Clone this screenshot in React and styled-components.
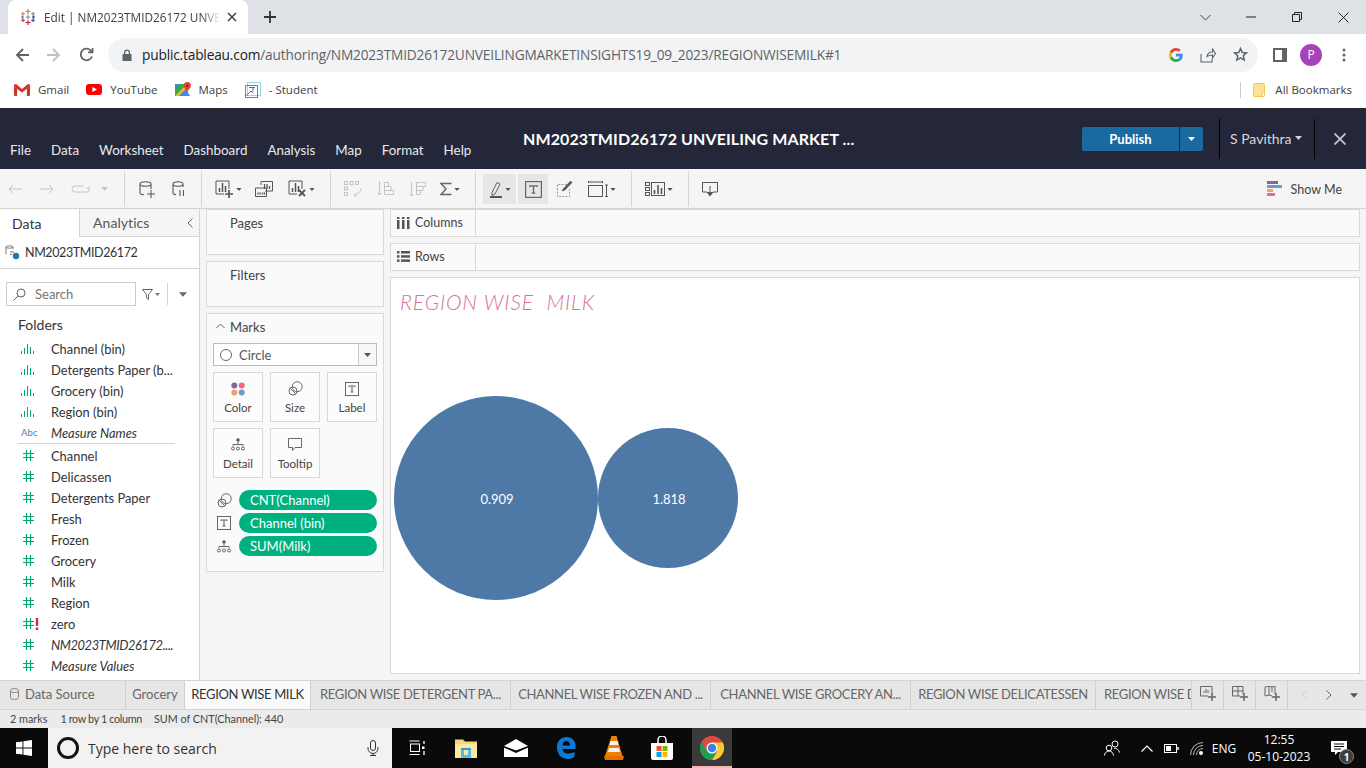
import React from 'react';
import styled, { createGlobalStyle } from 'styled-components';

const Global = createGlobalStyle`
  html, body { margin: 0; padding: 0; background: #fff; }
  #root { width: 1366px; height: 768px; overflow: hidden; }
  * { box-sizing: border-box; }
`;
const Page = styled.div`
  width: 1366px; height: 768px; display: flex; flex-direction: column; overflow: hidden;
  font-family: "Lato", "Open Sans", sans-serif; color: #333;
`;
const Svg = styled.svg`display: block; flex: none;`;

/* ---------- browser chrome ---------- */
const TabStrip = styled.div`
  height: 34px; background: #dee1e6; display: flex; align-items: stretch; padding-left: 8px; flex: none;
`;
const BrowserTab = styled.div`
  width: 240px; background: #fff; border-radius: 8px 8px 0 0; display: flex; align-items: center; padding: 0 10px 0 12px;
  font: 11.8px "Open Sans", sans-serif; color: #3c4043;
`;
const TabTitle = styled.span`
  margin-left: 8px; width: 176px; white-space: nowrap; overflow: hidden;
  -webkit-mask-image: linear-gradient(90deg, #000 90%, transparent);
  mask-image: linear-gradient(90deg, #000 90%, transparent);
`;
const TabClose = styled.span`margin-left: 7px; display: flex;`;
const NewTab = styled.span`margin-left: 16px; display: flex; align-items: center;`;
const WinControls = styled.div`margin-left: auto; display: flex; align-items: center; padding-right: 0;`;
const WinBtn = styled.span`width: 46px; height: 28px; display: flex; align-items: center; justify-content: center;`;

const NavBar = styled.div`
  height: 41px; background: #fff; display: flex; align-items: center; padding-left: 15px; flex: none;
`;
const NavBtn = styled.span`width: 32px; display: flex; align-items: center; justify-content: flex-start;`;
const Omnibox = styled.div`
  margin-left: -3px; width: 1150px; height: 34px; border-radius: 17px; background: #f1f3f4; display: flex; align-items: center;
  padding: 0 10px 0 14px; font: 13.7px "Open Sans", sans-serif; color: #5f6368; letter-spacing: -.17px;
`;
const Url = styled.span`margin-left: 10px; white-space: nowrap; b { font-weight: 400; color: #202124; }`;
const OmniIcons = styled.div`margin-left: auto; display: flex; align-items: center; gap: 17px;`;
const NavRight = styled.div`display: flex; align-items: center; margin-left: 15px; gap: 13px;`;
const Avatar = styled.span`
  width: 22px; height: 22px; border-radius: 50%; background: #a742b8; color: #fff; display: flex; align-items: center;
  justify-content: center; font: 12px "Open Sans", sans-serif;
`;
const DotsSlot = styled.span`margin-left: 7px; display: flex;`;

const Bookmarks = styled.div`
  height: 34px; background: #fff; display: flex; align-items: center; padding: 0 14px 4px; font: 11.5px "Open Sans", sans-serif;
  color: #3c4043; flex: none; border-bottom: 1px solid #2a2a2a;
`;
const Bookmark = styled.span`display: flex; align-items: center; gap: 8px; margin-right: 17px;`;
const BookmarkEnd = styled.div`
  margin-left: auto; display: flex; align-items: center; gap: 10px; span.sep { width: 1px; height: 16px; background: #ccc; margin-right: 2px; }
`;

/* ---------- tableau header ---------- */
const AppHeader = styled.div`
  height: 60px; background: #232739; display: flex; align-items: stretch; padding-left: 10px; flex: none; color: #e8eaee;
`;
const Menu = styled.nav`display: flex; gap: 20px; align-items: flex-end; padding-bottom: 11px; font-size: 13.4px; width: 513px;`;
const DocTitle = styled.div`
  align-self: center; font-weight: 700; font-size: 16px; color: #fff; white-space: nowrap; letter-spacing: .1px; margin-top: -2px; width: 559px;
`;
const Publish = styled.div`
  align-self: center; display: flex; width: 121px; height: 24px; border-radius: 2px; overflow: hidden; margin-top: -1px;
  font-weight: 700; font-size: 13px; color: #fff;
`;
const PublishMain = styled.span`flex: 1; background: #1a6aa0; display: flex; align-items: center; justify-content: center;`;
const PublishCaret = styled.span`
  width: 24px; background: #1a6aa0; border-left: 1px solid #232739; display: flex; align-items: center; justify-content: center;
`;
const HeaderDivider = styled.span`width: 1px; height: 40px; background: #000; align-self: center; margin-left: ${p => p.$ml}px;`;
const UserName = styled.div`
  align-self: center; margin: -2px 0 0 10px; display: flex; align-items: center; gap: 3px; font-size: 14px; color: #d4d7dd; width: 84px;
`;
const HeaderClose = styled.span`align-self: center; margin-left: 19px; display: flex;`;

/* ---------- toolbar ---------- */
const Toolbar = styled.div`
  height: 40px; background: #f5f5f5; display: flex; align-items: center; flex: none; border-bottom: 1px solid #d4d4d4; padding: 1px 24px 0 0;
`;
const ToolBtn = styled.span`
  width: ${p => p.$w}px; height: 30px; margin-left: ${p => p.$ml || 0}px; display: flex; align-items: center; justify-content: center; gap: 2px;
  background: ${p => (p.$on ? '#e6e6e6' : 'transparent')}; flex: none;
`;
const ToolSep = styled.span`width: 1px; height: 36px; background: #d4d4d4; flex: none; margin: 0 ${p => p.$mr}px 0 ${p => p.$ml}px;`;
const ShowMe = styled.div`margin-left: auto; display: flex; align-items: center; gap: 9px; font-size: 12.5px; color: #444;`;

/* ---------- main ---------- */
const Main = styled.div`flex: 1; min-height: 0; display: flex; background: #f5f5f5;`;
const DataPane = styled.aside`width: 200px; background: #fff; border-right: 1px solid #d4d4d4; display: flex; flex-direction: column; flex: none;`;
const PaneTabs = styled.div`display: flex; height: 28px; flex: none; font-size: 14px;`;
const PaneTab = styled.div`
  width: ${p => p.$w}px; display: flex; align-items: center; padding-left: ${p => p.$pl}px; letter-spacing: .005em;
  background: ${p => (p.$on ? '#fff' : '#f5f5f5')}; color: ${p => (p.$on ? '#333' : '#555')};
  border-bottom: ${p => (p.$on ? 'none' : '1px solid #d4d4d4')}; border-left: ${p => (p.$on ? 'none' : '1px solid #d4d4d4')};
  justify-content: space-between; padding-right: 6px;
`;
const SourceRow = styled.div`
  height: 32px; display: flex; align-items: center; gap: 5px; padding: 0 0 1px 5px; border-bottom: 1px solid #d4d4d4; font-size: 12.5px; letter-spacing: -.4px; color: #333; flex: none;
`;
const SearchRow = styled.div`display: flex; align-items: center; padding: 13px 0 0 6px; flex: none;`;
const SearchBox = styled.div`
  width: 130px; height: 24px; border: 1px solid #ccc; display: flex; align-items: center; gap: 9px; padding-left: 6px; font-size: 13px; color: #777;
`;
const FilterBtn = styled.span`margin-left: 6px; display: flex; align-items: center; gap: 2px; width: 25px;`;
const VSep = styled.span`width: 1px; height: 22px; background: #d4d4d4; margin-right: 11px;`;
const FoldersLabel = styled.div`padding: 10px 0 0 18px; height: 32px; font-size: 14px; color: #333; flex: none;`;
const FieldList = styled.div`display: flex; flex-direction: column; padding-bottom: 0;`;
const Field = styled.div`
  height: 21px; display: flex; align-items: center; font-size: 12.9px; color: #333; white-space: nowrap;
  font-style: ${p => (p.$it ? 'italic' : 'normal')}; letter-spacing: ${p => (p.$tight ? '-.4px' : '0')};
`;
const FieldIcon = styled.span`
  width: 51px; padding-left: ${p => p.$pl}px; display: flex; align-items: center; flex: none; font-style: normal; letter-spacing: 0;
`;
const AbcTag = styled.span`font-size: 9.5px; color: #4f81a8; letter-spacing: .01em;`;
const ErrorMark = styled.span`margin-left: 1px; display: flex;`;
const FieldSep = styled.div`height: 1px; background: #d4d4d4; margin: 0 24px 1px 18px;`;

const Cards = styled.section`width: 190px; flex: none; padding: 0 6px; display: flex; flex-direction: column; gap: 6px; background: #f5f5f5;`;
const Card = styled.div`
  background: #fafafa; border: 1px solid #d9d9d9; height: ${p => p.$h}px; padding: 5px 6px 0;
`;
const CardTitle = styled.div`font-size: 13px; color: #444; padding-left: 17px; height: 16px; display: flex; align-items: center; position: relative;`;
const CardChevron = styled.span`position: absolute; left: 3px; top: 4px; display: flex;`;
const MarkSelect = styled.div`
  margin-top: 8px; height: 23px; border: 1px solid #bbb; display: flex; align-items: center; padding-left: 6px; gap: 7px; background: #fff; font-size: 13px; color: #555;
`;
const MarkCaret = styled.span`margin-left: auto; width: 18px; height: 100%; border-left: 1px solid #ccc; display: flex; align-items: center; justify-content: center; background: #f7f7f7;`;
const MarkGrid = styled.div`display: grid; grid-template-columns: repeat(3, 50px); grid-auto-rows: 50px; gap: 6px 7px; margin-top: 6px;`;
const MarkBtn = styled.div`
  border: 1px solid #d9d9d9; background: #fcfcfc; display: flex; flex-direction: column; align-items: center; padding-top: 7px; gap: 4px; font-size: 11.5px; color: #444;
`;
const IconSlot = styled.span`height: 17px; display: flex; align-items: center; justify-content: center;`;
const PillList = styled.div`display: flex; flex-direction: column; gap: 3px; margin-top: 12px;`;
const PillRow = styled.div`display: flex; align-items: center;`;
const PillIcon = styled.span`width: 26px; display: flex; padding-left: 4px;`;
const Pill = styled.div`
  flex: 1; height: 20px; border-radius: 10px; background: #00b180; color: #fff; font-size: 13px; padding-left: 11px; display: flex; align-items: center;
`;

const Work = styled.section`flex: 1; min-width: 0; display: flex; flex-direction: column; padding-right: 6px; gap: 6px; padding-bottom: 6px;`;
const Shelf = styled.div`height: 28px; border: 1px solid #d9d9d9; background: #fafafa; display: flex; align-items: stretch; flex: none;`;
const ShelfLabel = styled.div`
  width: 85px; border-right: 1px solid #d9d9d9; display: flex; align-items: center; gap: 5px; padding: 0 0 1px 6px; font-size: 12.5px; color: #444;
`;
const Viz = styled.div`flex: 1; min-height: 0; background: #fff; border: 1px solid #d9d9d9; display: flex; flex-direction: column;`;
const VizTitle = styled.div`
  font-size: 21px; font-style: italic; font-weight: 300; color: #d9709a; padding: 11px 0 0 9px; height: 40px; white-space: pre; letter-spacing: .9px;
`;
const Bubbles = styled.div`display: flex; align-items: center; padding: 78px 0 0 3px;`;
const Bubble = styled.div`
  width: ${p => p.$d}px; height: ${p => p.$d}px; border-radius: 50%; background: #4e79a7; color: #fff; font-size: 13px;
  display: flex; align-items: center; justify-content: center; flex: none; padding: 2px 0 0 2px;
`;

/* ---------- bottom ---------- */
const SheetTabs = styled.div`
  height: 30px; background: #e6e6e6; border-top: 1px solid #d4d4d4; border-bottom: 1px solid #d4d4d4; display: flex; align-items: stretch; flex: none; font-size: 13px; color: #666;
`;
const SheetTab = styled.div`
  width: ${p => p.$w}px; display: flex; align-items: center; justify-content: ${p => (p.$left ? 'flex-start' : 'center')};
  padding: 0 0 3px ${p => p.$left || 0}px; white-space: nowrap; overflow: hidden; flex: none;
  border-right: 1px solid #d0d0d0; gap: 6px; letter-spacing: ${p => (p.$caps ? '-.35px' : '0')};
  background: ${p => (p.$on ? '#fafafa' : 'transparent')}; color: ${p => (p.$on ? '#333' : '#666')};
`;
const SheetAdd = styled.div`width: 32px; flex: none; border-right: 1px solid #d0d0d0; display: flex; align-items: center; justify-content: center; padding-bottom: 3px;`;
const SheetNav = styled.div`flex: 1; display: flex; align-items: center; justify-content: space-between; padding: 0 8px 0 13px;`;
const Status = styled.div`
  height: 18px; background: #ebebeb; display: flex; align-items: center; gap: 12px; padding: 0 0 1px 10px; font-size: 10.8px; color: #444; flex: none;
`;
const StatusItem = styled.span`letter-spacing: ${p => (p.$tight ? '-.35px' : '0')}; margin-left: ${p => (p.$tight ? 1 : 0)}px;`;

const Taskbar = styled.div`height: 40px; background: #0a0a0a; display: flex; align-items: stretch; flex: none; color: #fff;`;
const StartBtn = styled.span`width: 48px; display: flex; align-items: center; justify-content: center;`;
const TaskSearch = styled.div`
  width: 344px; background: #f2f2f2; color: #333; display: flex; align-items: center; padding: 0 13px 0 9px; gap: 9px; font: 14px "Open Sans", sans-serif;
`;
const SearchRing = styled.span`width: 22px; height: 22px; border: 3px solid #111; border-radius: 50%; flex: none;`;
const TaskMic = styled.span`margin-left: auto; display: flex;`;
const TaskApps = styled.div`display: flex; margin-left: 0;`;
const TaskApp = styled.span`
  width: ${p => p.$w || 50}px; display: flex; align-items: center; justify-content: center; flex: none;
  background: ${p => (p.$on ? '#3a3a3a' : 'transparent')}; box-shadow: ${p => (p.$on ? 'inset 0 -2px 0 #f4b6b6' : 'none')};
  margin-left: ${p => p.$ml || 0}px;
`;
const Tray = styled.div`margin-left: auto; display: flex; align-items: center; font: 12px "Open Sans", sans-serif;`;
const TraySlot = styled.span`width: ${p => p.$w}px; display: flex; align-items: center; justify-content: center; flex: none;`;
const Clock = styled.div`width: 74px; text-align: center; line-height: 17px; font-size: 12px; margin-left: 8px;`;
const Notify = styled.span`width: 38px; margin-left: 4px; margin-right: 8px; position: relative; display: flex; justify-content: center;`;
const NotifyBadge = styled.span`
  position: absolute; left: 19px; top: 8px; width: 15px; height: 15px; border-radius: 50%; background: #3d3d3d; border: 1px solid #888; font-size: 10px;
  display: flex; align-items: center; justify-content: center; font-weight: 700;
`;

/* ---------- icons ---------- */
const Caret = ({ c = '#666', w = 7, h = 4 }) => (
  <Svg width={w} height={h} viewBox="0 0 7 4"><path d="M0 0h7L3.5 4z" fill={c} /></Svg>
);
const TableauLogo = () => (
  <Svg width="16" height="16" viewBox="0 0 16 16" strokeWidth="1.1" fill="none">
    <path d="M8 0v5M5.5 2.5h5" stroke="#e8762b" />
    <path d="M3 3v3.6M1.2 4.8h3.6" stroke="#e8762b" />
    <path d="M13 3v3.6M11.2 4.8h3.6" stroke="#5b879b" />
    <path d="M2.5 6.5v3M1 8h3" stroke="#59879b" />
    <path d="M8 5.8v4.4M5.8 8h4.4" stroke="#7099a6" />
    <path d="M13.5 6.5v3M12 8h3" stroke="#1f447f" />
    <path d="M3 9.4V13M1.2 11.2h3.6" stroke="#c72035" />
    <path d="M13 9.4V13M11.2 11.2h3.6" stroke="#1f457e" />
    <path d="M8 11v5M5.5 13.5h5" stroke="#c72035" />
  </Svg>
);
const Line = ({ d, w = 16, h = 16, c = '#5f6368', sw = 1.5, vb }) => (
  <Svg width={w} height={h} viewBox={vb || `0 0 ${w} ${h}`} fill="none" stroke={c} strokeWidth={sw}><path d={d} /></Svg>
);
const GoogleG = () => (
  <Svg width="14" height="14" viewBox="0 0 48 48">
    <path fill="#EA4335" d="M24 9.5c3.5 0 6.7 1.2 9.2 3.6l6.9-6.9C35.9 2.4 30.4 0 24 0 14.6 0 6.5 5.4 2.6 13.2l8 6.2C12.4 13.7 17.7 9.5 24 9.5z" />
    <path fill="#4285F4" d="M46.9 24.5c0-1.6-.1-3.1-.4-4.5H24v9h12.9c-.6 3-2.2 5.5-4.7 7.2l7.7 6c4.5-4.2 7-10.3 7-17.7z" />
    <path fill="#FBBC05" d="M10.5 28.6A14.5 14.5 0 0 1 10.5 19.4l-8-6.2a24 24 0 0 0 0 21.6z" />
    <path fill="#34A853" d="M24 48c6.5 0 11.9-2.1 15.9-5.8l-7.7-6c-2.2 1.5-4.9 2.3-8.2 2.3-6.3 0-11.6-4.2-13.5-9.9l-8 6.2C6.5 42.6 14.6 48 24 48z" />
  </Svg>
);
const GmailIcon = () => (
  <Svg width="16" height="12" viewBox="0 0 16 12">
    <path d="M1 12V1.5L8 7l7-5.5V12h-3V5.5L8 9 4 5.5V12z" fill="#eee" />
    <path d="M0 2c0-1.6 1.5-2.4 2.6-1.5L8 5l5.4-4.5C14.5-.4 16 .4 16 2v.5L8 8.5 0 2.5z" fill="#d93025" />
    <path d="M0 2.2l3 2.3V12H1a1 1 0 0 1-1-1zM16 2.2l-3 2.3V12h2a1 1 0 0 0 1-1z" fill="#c5362b" />
  </Svg>
);
const YouTubeIcon = () => (
  <Svg width="16" height="11" viewBox="0 0 16 11">
    <rect width="16" height="11" rx="3" fill="#f00" /><path d="M6.4 3v5L11 5.5z" fill="#fff" />
  </Svg>
);
const MapsIcon = () => (
  <Svg width="16" height="16" viewBox="0 0 16 16">
    <path d="M0 2h11v12H0z" fill="#34a853" />
    <path d="M0 2h5L0 7z" fill="#4285f4" opacity=".7" />
    <path d="M0 14l11-11v4L4 14z" fill="#fbbc04" />
    <path d="M4 14l7-7 4 7z" fill="#4285f4" />
    <path d="M12.3 0a3.6 3.6 0 0 1 3.6 3.6c0 2.4-2.4 3.9-3.6 6.6-1.2-2.7-3.6-4.2-3.6-6.6A3.6 3.6 0 0 1 12.3 0z" fill="#ea4335" />
    <circle cx="12.3" cy="3.7" r="1.2" fill="#8e1b14" />
  </Svg>
);
const StudentIcon = () => (
  <Svg width="16" height="16" viewBox="0 0 16 16" fill="none">
    <rect x="2.5" y=".5" width="13" height="13" stroke="#9ad3e8" />
    <rect x=".5" y="3.5" width="12" height="12" stroke="#6f7f96" />
    <path d="M1 14l5-5 2 2M4 5.5h6M8 5.5v4" stroke="#5c6b85" />
  </Svg>
);
const FolderYellow = () => (
  <Svg width="12" height="14" viewBox="0 0 12 14">
    <path d="M.5 1.5a1 1 0 0 1 1-1h9a1 1 0 0 1 1 1v11a1 1 0 0 1-1 1h-9a1 1 0 0 1-1-1z" fill="#fde293" stroke="#f2c94c" />
    <rect x="9.5" y="10" width="2" height="3.5" fill="#fff" stroke="#f2c94c" strokeWidth=".6" />
  </Svg>
);
const SideFolderGlyph = () => (
  <Svg width="14" height="14" viewBox="0 0 14 14">
    <path d="M0 0h14v14H0z" fill="#5f6368" /><path d="M2 2h7v10H2z" fill="#fff" />
  </Svg>
);
const BinIcon = () => (
  <Svg width="14" height="11" viewBox="0 0 14 11" fill="#00a878">
    <rect x="1" y="8" width="1" height="3" /><rect x="4" y="5" width="1" height="6" /><rect x="7" y="1" width="1" height="10" />
    <rect x="10" y="4" width="1" height="7" /><rect x="13" y="8" width="1" height="3" />
  </Svg>
);
const HashIcon = () => (
  <Svg width="11" height="11" viewBox="0 0 11 11" stroke="#00a878" strokeWidth="1.2" fill="none">
    <path d="M3.500 0v11M7.500 0v11M0 3.500h11M0 7.500h11" />
  </Svg>
);
const TIcon = ({ s = 14, c = '#666' }) => (
  <Svg width={s} height={s} viewBox="0 0 14 14" fill="none" stroke={c}>
    <rect x=".5" y=".5" width="13" height="13" /><path d="M4 5V4h6v1M7 4v6M5.5 10h3" strokeWidth="1.1" />
  </Svg>
);
const SizeIcon = ({ c = '#666' }) => (
  <Svg width="15" height="15" viewBox="0 0 15 15" fill="none" stroke={c}>
    <circle cx="9.2" cy="5.7" r="5" /><circle cx="5" cy="10" r="4" /><path d="M2.2 7.4l5.4 5.2" />
  </Svg>
);
const DetailIcon = () => (
  <Svg width="14" height="13" viewBox="0 0 14 13" fill="none" stroke="#666">
    <circle cx="7" cy="2" r="1.7" fill="#555" stroke="none" />
    <path d="M7 4v3M2 8V6.5h10V8" />
    <circle cx="2" cy="10.5" r="1.5" /><circle cx="7" cy="10.5" r="1.5" /><circle cx="12" cy="10.5" r="1.5" />
  </Svg>
);
const ColorIcon = () => (
  <Svg width="14" height="14" viewBox="0 0 14 14">
    <circle cx="3.3" cy="3.4" r="3" fill="#7d6b99" /><circle cx="10.7" cy="3.4" r="3" fill="#f5677f" />
    <circle cx="3.3" cy="10.6" r="3" fill="#f1a06e" /><circle cx="10.7" cy="10.6" r="3" fill="#6f9ccb" />
  </Svg>
);
const SearchGlyph = () => (
  <Svg width="13" height="13" viewBox="0 0 13 13" fill="none" stroke="#666">
    <circle cx="8" cy="5" r="4" /><path d="M5 8l-4.500 4.500" />
  </Svg>
);
const BarsBox = ({ plus, x }) => (
  <Svg width="19" height="18" viewBox="0 0 19 18" fill="none" stroke="#555">
    <path d="M14 9V1H1v13h8" />
    <path d="M4.500 12V8M7.500 12V3M10.500 12V6" strokeWidth="1.500" />
    {plus && <path d="M14 10v8M10 14h8" strokeWidth="1.700" />}
    {x && <path d="M11 10l6 6M17 10l-6 6" strokeWidth="1.800" />}
  </Svg>
);

const bins = ['Channel (bin)', 'Detergents Paper (b...', 'Grocery (bin)', 'Region (bin)'];
const measures = ['Channel', 'Delicassen', 'Detergents Paper', 'Fresh', 'Frozen', 'Grocery', 'Milk', 'Region'];
const sheets = [
  ['REGION WISE DETERGENT PA...', 200], ['CHANNEL WISE FROZEN AND ...', 200],
  ['CHANNEL WISE GROCERY AN...', 200], ['REGION WISE DELICATESSEN', 185],
];

export default function App() {
  return (
    <Page>
      <Global />
      <TabStrip>
        <BrowserTab>
          <TableauLogo />
          <TabTitle>Edit | NM2023TMID26172 UNVEIL</TabTitle>
          <TabClose><Line w={10} h={10} c="#444" sw={1.6} d="M1 1l8 8M9 1l-8 8" /></TabClose>
        </BrowserTab>
        <NewTab><Line w={12} h={12} c="#333" sw={1.8} d="M6 0v12M0 6h12" /></NewTab>
        <WinControls>
          <WinBtn><Line w={11} h={7} c="#444" sw={1} d="M.5 1l5 5 5-5" /></WinBtn>
          <WinBtn><Line w={10} h={2} c="#222" sw={1} d="M0 1h10" /></WinBtn>
          <WinBtn><Line w={10} h={10} c="#222" sw={1} d="M.5 2.500h7v7h-7zM2.500 2.500v-2h7v7h-2" /></WinBtn>
          <WinBtn><Line w={11} h={11} c="#222" sw={1} d="M.5.5l10 10M10.500.5l-10 10" /></WinBtn>
        </WinControls>
      </TabStrip>

      <NavBar>
        <NavBtn><Line w={14} h={14} c="#5f6368" sw={1.9} d="M14 7H2M8 1L2 7l6 6" /></NavBtn>
        <NavBtn><Line w={14} h={14} c="#bdc1c6" sw={1.9} d="M0 7h12M6 1l6 6-6 6" /></NavBtn>
        <NavBtn><Line w={15} h={15} c="#5f6368" sw={1.8} d="M13 9.500A5.800 5.800 0 1 1 11.600 3.300L13.500 5M13.500 1v4.400H9" /></NavBtn>
        <Omnibox>
          <Svg width="10" height="12" viewBox="0 0 10 12">
            <path d="M2 5V3.500a3 3 0 0 1 6 0V5h1.500v7H.5V5zM3.300 5h3.400V3.500a1.700 1.700 0 0 0-3.400 0z" fill="#5f6368" />
          </Svg>
          <Url><b>public.tableau.com</b>/authoring/NM2023TMID26172UNVEILINGMARKETINSIGHTS19_09_2023/REGIONWISEMILK#1</Url>
          <OmniIcons>
            <GoogleG />
            <Line w={16} h={16} c="#5f6368" sw={1.1} d="M1 7v8h11v-3M7 9.500c.5-3 3-4.500 5.500-4.500V2l3 4.500-3 4.500V8C10 8 8.500 8.500 7 9.500z" />
            <Line w={15} h={15} c="#5f6368" sw={1.5} d="M7.500 1.500l1.800 4 4.200.4-3.200 2.900.9 4.300-3.700-2.200-3.700 2.200.9-4.300L1.500 5.900l4.200-.4z" />
          </OmniIcons>
        </Omnibox>
        <NavRight>
          <SideFolderGlyph />
          <Avatar>P</Avatar>
          <DotsSlot>
            <Svg width="4" height="14" viewBox="0 0 4 14" fill="#5f6368">
              <circle cx="2" cy="2" r="1.500" /><circle cx="2" cy="7" r="1.500" /><circle cx="2" cy="12" r="1.500" />
            </Svg>
          </DotsSlot>
        </NavRight>
      </NavBar>

      <Bookmarks>
        <Bookmark><GmailIcon />Gmail</Bookmark>
        <Bookmark><YouTubeIcon />YouTube</Bookmark>
        <Bookmark><MapsIcon />Maps</Bookmark>
        <Bookmark><StudentIcon />- Student</Bookmark>
        <BookmarkEnd>
          <span className="sep" />
          <FolderYellow />
          All Bookmarks
        </BookmarkEnd>
      </Bookmarks>

      <AppHeader>
        <Menu>
          {['File', 'Data', 'Worksheet', 'Dashboard', 'Analysis', 'Map', 'Format', 'Help'].map(m => <span key={m}>{m}</span>)}
        </Menu>
        <DocTitle>NM2023TMID26172 UNVEILING MARKET ...</DocTitle>
        <Publish>
          <PublishMain>Publish</PublishMain>
          <PublishCaret><Caret c="#fff" /></PublishCaret>
        </Publish>
        <HeaderDivider $ml={16} />
        <UserName>S Pavithra <Caret c="#d4d7dd" /></UserName>
        <HeaderDivider $ml={0} />
        <HeaderClose><Line w={12} h={12} c="#c4c7cc" sw={1.8} d="M.5.5l11 11M11.500.5l-11 11" /></HeaderClose>
      </AppHeader>

      <Toolbar>
        <ToolBtn $w={30}><Line w={14} h={10} c="#c4c4c4" sw={1} d="M14 5H1M5 1L1 5l4 4" /></ToolBtn>
        <ToolBtn $w={34}><Line w={14} h={10} c="#c4c4c4" sw={1} d="M0 5h13M9 1l4 4-4 4" /></ToolBtn>
        <ToolBtn $w={32}><Line w={19} h={10} c="#c4c4c4" sw={1} d="M13 2H4a3 3 0 0 0 0 6h12a2 2 0 0 0 2-2V3M15.500 5l2.500-2.500" /></ToolBtn>
        <ToolBtn $w={16}><Caret c="#c4c4c4" /></ToolBtn>
        <ToolSep $ml={12} $mr={7} />
        <ToolBtn $w={30}>
          <Line w={16} h={17} c="#555" sw={1.1} d="M1 3c0-3 11-3 11 0s-11 3-11 0v9c0 1 2 1.600 4 1.800M12 3v5M12 9v8M8 13h8" />
        </ToolBtn>
        <ToolBtn $w={32}>
          <Line w={13} h={16} c="#555" sw={1.1} d="M1 3c0-3 10-3 10 0s-10 3-10 0v9c0 1 1.500 1.500 3 1.700M11 3v3M8 9v6M11.500 9v6" />
        </ToolBtn>
        <ToolSep $ml={7} $mr={10} />
        <ToolBtn $w={32}><BarsBox plus /><Caret c="#555" w={6} h={3} /></ToolBtn>
        <ToolBtn $w={40}>
          <Svg width="18" height="17" viewBox="0 0 18 17" fill="none" stroke="#555">
            <path d="M6 4V.5h11.500V10H10" /><path d="M.5 15.500V7h11v8.500z" />
            <path d="M3 13.500v-2M5 13.500v-2M7.500 13.500v-2M9.500 13.500v-2M9.500 8V3M12 8V3M14.500 8V5" strokeWidth="1.300" />
          </Svg>
        </ToolBtn>
        <ToolBtn $w={34}><BarsBox x /><Caret c="#555" w={6} h={3} /></ToolBtn>
        <ToolSep $ml={12} $mr={6} />
        <ToolBtn $w={32}>
          <Svg width="18" height="16" viewBox="0 0 18 16" fill="none" stroke="#c4c4c4">
            <rect x=".5" y=".5" width="3" height="3" /><rect x="6" y=".5" width="3" height="3" /><rect x="11.500" y=".5" width="3" height="3" />
            <rect x=".5" y="6" width="3" height="3" /><rect x=".5" y="11.500" width="3" height="3" />
            <path d="M17 7a7 7 0 0 1-7 7M10 14l2.500-2M10 14l2.500 2" />
          </Svg>
        </ToolBtn>
        <ToolBtn $w={32}>
          <Svg width="17" height="16" viewBox="0 0 17 16" fill="none" stroke="#c4c4c4">
            <path d="M2.500 0v14M.5 12l2 2 2-2" /><path d="M7.500 1.500h4v4h-4zM7.500 5.500h6.500v4H7.500zM7.500 9.500h9v4h-9z" />
          </Svg>
        </ToolBtn>
        <ToolBtn $w={32}>
          <Svg width="17" height="16" viewBox="0 0 17 16" fill="none" stroke="#c4c4c4">
            <path d="M2.500 1v14M.5 13l2 2 2-2" /><path d="M7.500 1.500h9v4h-9zM7.500 5.500h6.500v4H7.500zM7.500 9.500h4v4h-4z" />
          </Svg>
        </ToolBtn>
        <ToolBtn $w={34}>
          <Line w={12} h={14} c="#666" sw={1.4} d="M11.500 1.500H1l5 5.500-5 5.500h10.500" />
          <Caret c="#555" w={6} h={3} />
        </ToolBtn>
        <ToolSep $ml={8} $mr={7} />
        <ToolBtn $w={33} $on>
          <Svg width="14" height="17" viewBox="0 0 14 17" fill="none" stroke="#666">
            <path d="M3 11.500L8 1.500l3 1.500-5 10-3 1.500z" /><path d="M1 16h12" stroke="#555" strokeWidth="2" />
          </Svg>
          <Caret c="#555" w={6} h={3} />
        </ToolBtn>
        <ToolBtn $w={30} $ml={2} $on><TIcon s={17} c="#666" /></ToolBtn>
        <ToolBtn $w={34}>
          <Svg width="16" height="16" viewBox="0 0 16 16" fill="none" stroke="#999">
            <path d="M10 3.500H.5v12h12V8" strokeDasharray="2 1.300" /><path d="M5 10l3-1 7-7.500L13.500 0 6.500 7.500z" fill="#555" stroke="#555" strokeWidth=".6" />
          </Svg>
        </ToolBtn>
        <ToolBtn $w={40}>
          <Svg width="20" height="16" viewBox="0 0 20 16" fill="none" stroke="#555">
            <path d="M.5 0v2M.5 1h14M14.500 0v2" /><rect x=".5" y="4.500" width="14" height="11" />
            <path d="M17 4h3M18.500 4v11M17 15.500h3" />
          </Svg>
          <Caret c="#555" w={6} h={3} />
        </ToolBtn>
        <ToolSep $ml={9} $mr={5} />
        <ToolBtn $w={44}>
          <Svg width="20" height="14" viewBox="0 0 20 14" fill="none" stroke="#555">
            <rect x=".5" y=".5" width="4" height="3" /><rect x=".5" y="5.500" width="4" height="3" /><rect x=".5" y="10.500" width="4" height="3" />
            <rect x="6.500" y=".5" width="13" height="13" />
            <path d="M9.500 12V8M13 12V3M16.500 12V6" strokeWidth="1.600" />
          </Svg>
          <Caret c="#555" w={6} h={3} />
        </ToolBtn>
        <ToolSep $ml={7} $mr={5} />
        <ToolBtn $w={32}>
          <Svg width="16" height="15" viewBox="0 0 16 15" fill="none" stroke="#555">
            <path d="M5 10H.5V.5h15V10H11" /><path d="M8 4v7" /><path d="M4.500 10h7L8 14.500z" fill="#555" stroke="none" />
          </Svg>
        </ToolBtn>
        <ShowMe>
          <Svg width="15" height="16" viewBox="0 0 15 16">
            <rect width="11" height="3" fill="#7d6b99" /><rect y="4" width="15" height="3" fill="#6f9ccb" />
            <rect y="8" width="6" height="3" fill="#f1a06e" /><rect y="12" width="8" height="3" fill="#f5677f" />
          </Svg>
          Show Me
        </ShowMe>
      </Toolbar>

      <Main>
        <DataPane>
          <PaneTabs>
            <PaneTab $on $w={79} $pl={12}>Data</PaneTab>
            <PaneTab $w={120} $pl={13}>Analytics<Line w={6} h={10} c="#666" sw={1} d="M5.500.5L1 5l4.500 4.500" /></PaneTab>
          </PaneTabs>
          <SourceRow>
            <Svg width="15" height="15" viewBox="0 0 15 15" fill="none" stroke="#777">
              <path d="M1 9V2c0-1.500 7-1.500 7 0v2M1 2c0 1.500 7 1.500 7 0" /><path d="M5 7h4M5 9.500h2" />
              <circle cx="11" cy="11" r="3.200" fill="#1f77b4" stroke="none" />
            </Svg>
            NM2023TMID26172
          </SourceRow>
          <SearchRow>
            <SearchBox>
              <SearchGlyph />
              Search
            </SearchBox>
            <FilterBtn>
              <Line w={11} h={11} c="#666" sw={1} d="M.5.500h10L6.500 5.500v5l-2-1.500V5.500z" />
              <Caret c="#777" w={5} h={3} />
            </FilterBtn>
            <VSep />
            <Caret c="#666" w={8} h={5} />
          </SearchRow>
          <FoldersLabel>Folders</FoldersLabel>
          <FieldList>
            {bins.map(b => <Field key={b}><FieldIcon $pl={20}><BinIcon /></FieldIcon>{b}</Field>)}
            <Field $it><FieldIcon $pl={21}><AbcTag>Abc</AbcTag></FieldIcon>Measure Names</Field>
            <FieldSep />
            {measures.map(m => <Field key={m}><FieldIcon $pl={23}><HashIcon /></FieldIcon>{m}</Field>)}
            <Field>
              <FieldIcon $pl={23}>
                <HashIcon />
                <ErrorMark>
                  <Svg width="4" height="12" viewBox="0 0 4 12"><path d="M.8 0h2.400v8H.8zM.8 9.500h2.400V12H.8z" fill="#c8323f" /></Svg>
                </ErrorMark>
              </FieldIcon>
              zero
            </Field>
            <Field $it $tight><FieldIcon $pl={23}><HashIcon /></FieldIcon>NM2023TMID26172....</Field>
            <Field $it><FieldIcon $pl={23}><HashIcon /></FieldIcon>Measure Values</Field>
          </FieldList>
        </DataPane>

        <Cards>
          <Card $h={46}><CardTitle>Pages</CardTitle></Card>
          <Card $h={46}><CardTitle>Filters</CardTitle></Card>
          <Card $h={259}>
            <CardTitle>
              <CardChevron><Line w={9} h={6} c="#666" sw={1} d="M.5 5L4.500 1l4 4" /></CardChevron>
              Marks
            </CardTitle>
            <MarkSelect>
              <Svg width="12" height="12" viewBox="0 0 12 12" fill="none" stroke="#666"><circle cx="6" cy="6" r="5.500" /></Svg>
              Circle
              <MarkCaret><Caret c="#555" /></MarkCaret>
            </MarkSelect>
            <MarkGrid>
              <MarkBtn><IconSlot><ColorIcon /></IconSlot>Color</MarkBtn>
              <MarkBtn><IconSlot><SizeIcon /></IconSlot>Size</MarkBtn>
              <MarkBtn><IconSlot><TIcon /></IconSlot>Label</MarkBtn>
              <MarkBtn><IconSlot><DetailIcon /></IconSlot>Detail</MarkBtn>
              <MarkBtn>
                <IconSlot><Line w={14} h={13} c="#666" sw={1} d="M.5.500h13v9H7l-2.500 3v-3H.5z" /></IconSlot>
                Tooltip
              </MarkBtn>
            </MarkGrid>
            <PillList>
              <PillRow><PillIcon><SizeIcon /></PillIcon><Pill>CNT(Channel)</Pill></PillRow>
              <PillRow><PillIcon><TIcon /></PillIcon><Pill>Channel (bin)</Pill></PillRow>
              <PillRow><PillIcon><DetailIcon /></PillIcon><Pill>SUM(Milk)</Pill></PillRow>
            </PillList>
          </Card>
        </Cards>

        <Work>
          <Shelf>
            <ShelfLabel>
              <Svg width="13" height="12" viewBox="0 0 13 12" fill="#555">
                <rect x="0" y="3" width="2.500" height="9" /><rect x="5" y="3" width="2.500" height="9" /><rect x="10" y="3" width="2.500" height="9" />
                <rect x="0" y="0" width="2.500" height="2" /><rect x="5" y="0" width="2.500" height="2" /><rect x="10" y="0" width="2.500" height="2" />
              </Svg>
              Columns
            </ShelfLabel>
          </Shelf>
          <Shelf>
            <ShelfLabel>
              <Svg width="13" height="11" viewBox="0 0 13 11" fill="#555">
                <rect width="2.500" height="2.500" /><rect x="4" width="9" height="2.500" />
                <rect y="4.200" width="2.500" height="2.500" /><rect x="4" y="4.200" width="9" height="2.500" />
                <rect y="8.400" width="2.500" height="2.500" /><rect x="4" y="8.400" width="9" height="2.500" />
              </Svg>
              Rows
            </ShelfLabel>
          </Shelf>
          <Viz>
            <VizTitle>REGION WISE  MILK</VizTitle>
            <Bubbles>
              <Bubble $d={204}>0.909</Bubble>
              <Bubble $d={140}>1.818</Bubble>
            </Bubbles>
          </Viz>
        </Work>
      </Main>

      <SheetTabs>
        <SheetTab $w={126} $left={10}>
          <Line w={9} h={12} c="#888" sw={1} d="M.5 2.500c0-2.500 8-2.500 8 0v7c0 2.500-8 2.500-8 0zM.5 3c0 2 8 2 8 0" />
          Data Source
        </SheetTab>
        <SheetTab $w={59}>Grocery</SheetTab>
        <SheetTab $w={126} $on $caps>REGION WISE MILK</SheetTab>
        {sheets.map(([t, w]) => <SheetTab key={t} $w={w} $caps>{t}</SheetTab>)}
        <SheetTab $w={96} $left={8} $caps>REGION WISE D</SheetTab>
        <SheetAdd>
          <Svg width="16" height="15" viewBox="0 0 16 15" fill="none" stroke="#666">
            <path d="M12 8V.5H.5V10H8" /><path d="M4 7V5M6 7V3M8 7V4" /><path d="M12 7v8M8 11h8" strokeWidth="1.500" />
          </Svg>
        </SheetAdd>
        <SheetAdd>
          <Svg width="16" height="15" viewBox="0 0 16 15" fill="none" stroke="#666">
            <path d="M8 10H.5V.5H11V8M6 .5V10M.5 5H11" /><path d="M12 7v8M8 11h8" strokeWidth="1.500" />
          </Svg>
        </SheetAdd>
        <SheetAdd>
          <Svg width="16" height="15" viewBox="0 0 16 15" fill="none" stroke="#666">
            <path d="M8 10l-3-1-4 1V1l4-1 3 1 3-1v8M5 0v9M8 1v5" /><path d="M12 7v8M8 11h8" strokeWidth="1.500" />
          </Svg>
        </SheetAdd>
        <SheetNav>
          <Line w={6} h={10} c="#ccc" sw={1} d="M5.500.5L1 5l4.500 4.500" />
          <Line w={6} h={10} c="#666" sw={1} d="M.5.5L5 5 .5 9.500" />
          <Caret c="#555" w={8} h={5} />
        </SheetNav>
      </SheetTabs>
      <Status>
        <StatusItem>2 marks</StatusItem>
        <StatusItem $tight>1 row by 1 column</StatusItem>
        <StatusItem>SUM of CNT(Channel): 440</StatusItem>
      </Status>

      <Taskbar>
        <StartBtn>
          <Svg width="16" height="16" viewBox="0 0 16 16" fill="#fff">
            <path d="M0 2.300L6.500 1.400V7.500H0zM7.400 1.300L16 0v7.500H7.400zM0 8.400h6.500v6.200L0 13.700zM7.400 8.400H16V16l-8.600-1.300z" />
          </Svg>
        </StartBtn>
        <TaskSearch>
          <SearchRing />
          Type here to search
          <TaskMic>
            <Svg width="12" height="16" viewBox="0 0 12 16" fill="none" stroke="#333">
              <rect x="3.500" y=".5" width="5" height="10" rx="2.500" /><path d="M1 7v1.500a5 5 0 0 0 10 0V7M6 13.500V16M3 15.500h6" />
            </Svg>
          </TaskMic>
        </TaskSearch>
        <TaskApps>
          <TaskApp $ml={0} $w={49}>
            <Svg width="16" height="16" viewBox="0 0 16 16" fill="none" stroke="#fff">
              <path d="M.5 1h10M.5 14.500h10" /><rect x="1.500" y="4" width="9" height="7.500" />
              <path d="M15 1v3" strokeWidth="1.300" /><rect x="13" y="6.500" width="2.500" height="2.500" fill="#fff" stroke="none" /><path d="M15 11v4" strokeWidth="1.300" />
            </Svg>
          </TaskApp>
          <TaskApp $w={50}>
            <Svg width="22" height="20" viewBox="0 0 22 20">
              <path d="M0 1.500h8l2 2h12V20H0z" fill="#f6d67a" /><path d="M0 6h22v14H0z" fill="#fde8a0" />
              <path d="M6 10h10v2H6z" fill="#2b9fd8" /><path d="M6 12h3v8H6zM13 12h3v8h-3z" fill="#53bdf0" /><path d="M6 17h10v3H6z" fill="#53bdf0" />
            </Svg>
          </TaskApp>
          <TaskApp $w={50}>
            <Svg width="24" height="18" viewBox="0 0 24 18" fill="#fff">
              <path d="M12 0l12 7-12 4.500L0 7zM0 8.500L12 14l12-5.500V18H0z" />
              <path d="M0 8l12 4.500L24 8" fill="none" stroke="#0a0a0a" />
            </Svg>
          </TaskApp>
          <TaskApp $w={50}>
            <Svg width="20" height="22" viewBox="0 0 20 22">
              <path d="M1 10C1 4 5 0 11 0c5 0 8.500 3.500 8.500 9v3H6.500c.3 3 2.500 4.500 5.500 4.500 2.500 0 5-.7 6.500-1.700v4.700C16.500 21.500 14.500 22 12 22 5 22 1 17 1 10zm5.500-1.500h7.500C14 5.500 12.500 4 10.300 4S6.800 5.700 6.500 8.500z" fill="#0a78d4" />
            </Svg>
          </TaskApp>
          <TaskApp $w={46}>
            <Svg width="20" height="24" viewBox="0 0 20 24">
              <path d="M7.500 0h5l6 20H1z" fill="#f08000" /><path d="M6.500 5h7l1 4h-9zM5 12h10l1 4H4z" fill="#f4f4f4" />
              <path d="M0 20h20l-1 4H1z" fill="#e66d00" />
            </Svg>
          </TaskApp>
          <TaskApp $w={50}>
            <Svg width="24" height="24" viewBox="0 0 24 24">
              <path d="M1 7h22v15a2 2 0 0 1-2 2H3a2 2 0 0 1-2-2z" fill="#fff" />
              <path d="M8 7V4a4 4 0 0 1 8 0v3" fill="none" stroke="#fff" strokeWidth="1.500" />
              <rect x="6.500" y="10" width="5" height="5" fill="#f25022" /><rect x="12.500" y="10" width="5" height="5" fill="#7fba00" />
              <rect x="6.500" y="16" width="5" height="5" fill="#00a4ef" /><rect x="12.500" y="16" width="5" height="5" fill="#ffb900" />
            </Svg>
          </TaskApp>
          <TaskApp $w={40} $ml={5} $on>
            <Svg width="24" height="24" viewBox="0 0 24 24">
              <circle cx="12" cy="12" r="12" fill="#dd4b3e" />
              <path d="M12 24a12 12 0 0 0 10.400-18H12l5.200 9z" fill="#fcc934" />
              <path d="M1.600 6A12 12 0 0 0 12 24l5.200-9-5.200 0-5.200-3z" fill="#1e9e55" />
              <path d="M1.600 6L6.800 15 12 6.500h10.400A12 12 0 0 0 1.600 6z" fill="#dd4b3e" />
              <circle cx="12" cy="12" r="5.500" fill="#fff" /><circle cx="12" cy="12" r="4.300" fill="#3b82f0" />
            </Svg>
          </TaskApp>
        </TaskApps>
        <Tray>
          <TraySlot $w={36}>
            <Svg width="16" height="16" viewBox="0 0 16 16" fill="none" stroke="#fff">
              <circle cx="11" cy="4" r="3" /><circle cx="5" cy="8" r="2.800" /><path d="M.5 15.500c0-2.500 2-4.500 4.500-4.500s4 1.500 4.500 4.500M10 8c2.500 0 5 2 5.500 4.500" />
            </Svg>
          </TraySlot>
          <TraySlot $w={34}><Line w={12} h={7} c="#fff" sw={1.200} d="M.5 6.500L6 1l5.500 5.500" /></TraySlot>
          <TraySlot $w={14}>
            <Svg width="15" height="9" viewBox="0 0 15 9" fill="none" stroke="#fff">
              <rect x=".5" y=".5" width="12" height="8" /><rect x="2" y="2" width="5" height="5" fill="#fff" stroke="none" /><path d="M14 3v3" strokeWidth="1.500" />
            </Svg>
          </TraySlot>
          <TraySlot $w={36}>
            <Svg width="13" height="13" viewBox="0 0 13 13" fill="none" stroke="#bbb">
              <path d="M.5 13A12.500 12.500 0 0 1 13 .5M3.500 13A9.500 9.500 0 0 1 13 3.500M6.500 13A6.500 6.500 0 0 1 13 6.500" />
              <circle cx="11" cy="11" r="2" fill="#fff" stroke="none" />
            </Svg>
          </TraySlot>
          <TraySlot $w={20}>ENG</TraySlot>
          <Clock>12:55<br />05-10-2023</Clock>
          <Notify>
            <Svg width="16" height="14" viewBox="0 0 16 14">
              <path d="M0 0h16v11H7l-3 3v-3H0z" fill="#fff" /><path d="M3 3h10M3 5.500h10M3 8h7" stroke="#0a0a0a" />
            </Svg>
            <NotifyBadge>1</NotifyBadge>
          </Notify>
        </Tray>
      </Taskbar>
    </Page>
  );
}
